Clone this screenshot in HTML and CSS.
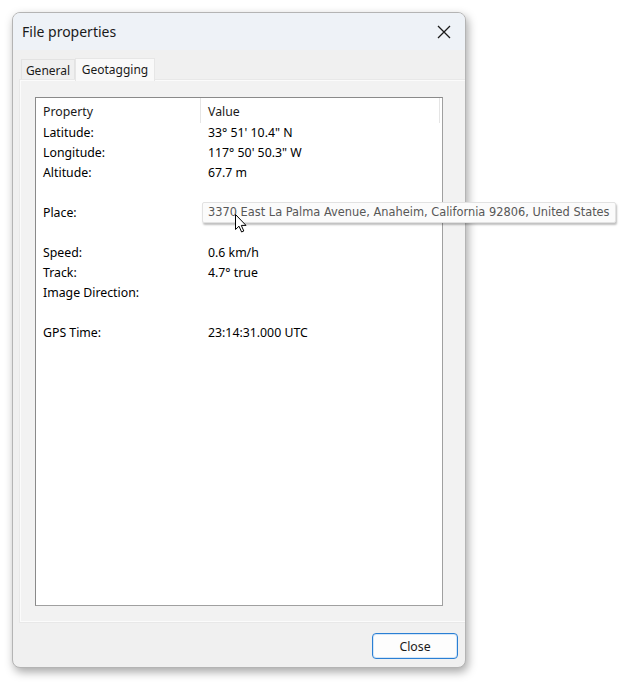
FILE: index.html
```html
<!DOCTYPE html>
<html>
<head>
<meta charset="utf-8">
<link rel="stylesheet" href="styles.css">
</head>
<body>
<div class="window">
  <div class="titlebar">
    <span class="title">File properties</span>
    <svg class="close-x" width="14" height="14" viewBox="0 0 14 14"><path d="M1 1 L13 13 M13 1 L1 13" stroke="#1a1a1a" stroke-width="1.3" fill="none"/></svg>
  </div>
  <div class="content">
    <div class="tabs">
      <div class="tab">General</div>
      <div class="tab active">Geotagging</div>
    </div>
    <div class="panel">
      <div class="listview">
        <div class="header">
          <div class="hcell c1">Property</div>
          <div class="hcell c2">Value</div>
        </div>
        <div class="row"><div class="c1">Latitude:</div><div class="c2">33° 51' 10.4" N</div></div>
        <div class="row"><div class="c1">Longitude:</div><div class="c2">117° 50' 50.3" W</div></div>
        <div class="row"><div class="c1">Altitude:</div><div class="c2">67.7 m</div></div>
        <div class="row"><div class="c1"></div><div class="c2"></div></div>
        <div class="row"><div class="c1">Place:</div><div class="c2"></div></div>
        <div class="row"><div class="c1"></div><div class="c2"></div></div>
        <div class="row"><div class="c1">Speed:</div><div class="c2">0.6 km/h</div></div>
        <div class="row"><div class="c1">Track:</div><div class="c2">4.7° true</div></div>
        <div class="row"><div class="c1">Image Direction:</div><div class="c2"></div></div>
        <div class="row"><div class="c1"></div><div class="c2"></div></div>
        <div class="row"><div class="c1">GPS Time:</div><div class="c2">23:14:31.000 UTC</div></div>
      </div>
    </div>
    <div class="footer">
      <button class="btn">Close</button>
    </div>
  </div>
</div>
<div class="tooltip">3370 East La Palma Avenue, Anaheim, California 92806, United States</div>
<svg class="cursor" width="12" height="19" viewBox="0 0 12 19"><path d="M0.5 0.5 L0.5 15.5 L4 12.2 L6.6 18 L8.8 17 L6.3 11.4 L11 11.4 Z" fill="#fff" stroke="#000" stroke-width="1" stroke-linejoin="miter"/></svg>
</body>
</html>
```
FILE: styles.css
```css
html, body {
  margin: 0;
  padding: 0;
  background: #ffffff;
}
body {
  width: 622px;
  height: 688px;
  position: relative;
  font-family: "Noto Sans", "Open Sans", sans-serif;
  font-size: 12.3px;
  color: #000;
  overflow: hidden;
}
.window {
  margin: 12px 0 0 12px;
  width: 452px;
  height: 654px;
  border: 1px solid #b4b4b4;
  border-radius: 8px;
  background: #f0f0f0;
  box-shadow: 2px 4px 10px rgba(0,0,0,0.35);
  display: flex;
  flex-direction: column;
  overflow: hidden;
}
.titlebar {
  height: 37px;
  flex: none;
  background: #eef2f7;
  display: flex;
  align-items: center;
  justify-content: space-between;
  padding: 0 14px 0 9px;
}
.title {
  font-size: 14px;
  color: #1a1a1a;
}
.close-x {
  display: block;
}
.content {
  flex: 1;
  display: flex;
  flex-direction: column;
  padding: 7px 0 0 7px;
}
.tabs {
  display: flex;
  align-items: flex-end;
  height: 23px;
  padding-left: 1px;
}
.tab {
  width: 52px;
  height: 20px;
  line-height: 21px;
  text-align: center;
  padding: 0;
  border: 1px solid #e3e3e3;
  border-bottom: none;
  color: #1a1a1a;
  background: #f0f0f0;
  font-size: 12px;
}
.tab.active {
  width: 78px;
  height: 22px;
  line-height: 21px;
  background: #f9f9f9;
  border-color: #e6e6e6;
  margin-left: 0;
  position: relative;
  z-index: 1;
  margin-bottom: -1px;
}
.panel {
  width: 435px;
  height: 524px;
  border: 1px solid #fbfbfb;
  outline: 1px solid #e8e8e8;
  background: #f2f2f2;
  padding: 16px 0 0 14px;
  box-sizing: content-box;
}
.listview {
  width: 406px;
  height: 507px;
  border: 1px solid #a0a0a0;
  border-left-color: #8a8a8a;
  border-top-color: #8a8a8a;
  background: #ffffff;
}
.header {
  display: flex;
  height: 25px;
  align-items: center;
}
.hcell {
  height: 25px;
  line-height: 27px;
  color: #1a1a1a;
  box-sizing: border-box;
}
.header .c1 {
  border-right: 1px solid #e5e5e5;
}
.header .c2 {
  border-right: 1px solid #e5e5e5;
  width: 239px;
}
.c1 {
  width: 165px;
  padding-left: 7px;
  box-sizing: border-box;
  flex: none;
}
.c2 {
  padding-left: 7px;
  flex: none;
}
.row {
  display: flex;
  height: 20px;
  line-height: 20px;
  color: #000;
}
.footer {
  flex: 1;
  display: flex;
  justify-content: flex-end;
  align-items: flex-start;
  padding: 11px 7px 0 0;
}
.btn {
  width: 86px;
  height: 26px;
  border: 1px solid #2a7fd4;
  border-radius: 4px;
  background: #fdfdfd;
  font-family: "Noto Sans", "Open Sans", sans-serif;
  font-size: 12.3px;
  color: #1a1a1a;
  padding: 0;
  box-shadow: inset 0 0 0 1px #d4e6f8;
}
.tooltip {
  position: absolute;
  left: 202px;
  top: 202px;
  height: 19px;
  line-height: 19px;
  padding: 0 5px;
  background: #fbfbfb;
  border: 1px solid #e2e2e2;
  border-radius: 2px;
  box-shadow: 1px 2px 2px rgba(0,0,0,0.25);
  font-family: "DejaVu Sans", Verdana, sans-serif;
  font-size: 11.4px;
  color: #575757;
  white-space: nowrap;
}
.cursor {
  position: absolute;
  left: 235px;
  top: 214px;
}
```
